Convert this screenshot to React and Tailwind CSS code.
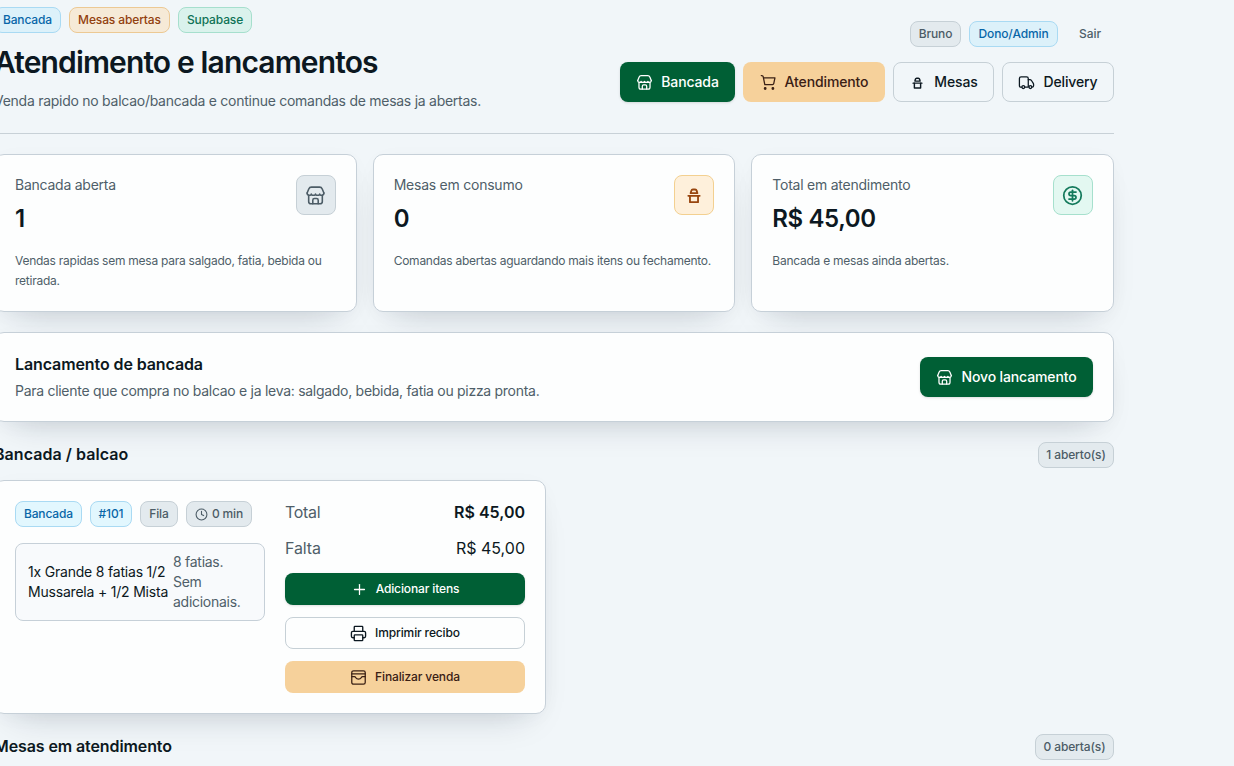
import React from 'react';
import clsx from 'clsx';
import { Plus, Printer, CircleDollarSign, Clock } from 'lucide-react';

const Icon = ({ size = 17, strokeWidth = 1.8, children }) => (
  <svg
    width={size}
    height={size}
    viewBox="0 0 24 24"
    fill="none"
    stroke="currentColor"
    strokeWidth={strokeWidth}
    strokeLinecap="round"
    strokeLinejoin="round"
    className="shrink-0"
  >
    {children}
  </svg>
);

const StoreIcon = ({ size }) => (
  <Icon size={size}>
    <path d="M2.4 9.2 4.300 4.600C5 2.900 5.700 2.400 7.300 2.400h9.400c1.600 0 2.300.5 3 2.200l1.900 4.600" />
    <path d="M2.400 9.200c0 1.500 1 2.600 2.400 2.600s2.400-.7 2.400-1.500c0 .8 1 1.500 2.400 1.500s2.400-.7 2.400-1.500c0 .8 1 1.500 2.400 1.500s2.400-.7 2.400-1.500c0 .8 1 1.500 2.400 1.500s2.400-1.100 2.400-2.600" />
    <path d="M4.200 12v6.800c0 1.900.8 2.700 2.700 2.700h10.200c1.900 0 2.700-.8 2.700-2.700V12" />
    <path d="M8.900 21.300v-3.900c0-1.300.6-1.900 1.900-1.900h2.400c1.300 0 1.900.6 1.900 1.900v3.900" />
  </Icon>
);

const CartIcon = () => (
  <Icon>
    <path d="M1.800 2.200h.8c1.100 0 1.700.5 1.900 1.500L6.800 15h10.800c1 0 1.600-.5 1.800-1.400l1.700-8H5" />
    <circle cx="7.300" cy="20.500" r="1.100" fill="currentColor" />
    <circle cx="18.200" cy="20.500" r="1.100" fill="currentColor" />
  </Icon>
);

const TableIcon = ({ size }) => (
  <Icon size={size} strokeWidth={2}>
    <path d="M8.300 10l.7-2.500c.3-1 .8-1.500 1.800-1.500h2.400c1 0 1.500.5 1.800 1.500l.7 2.500z" />
    <path d="M5.800 12.900h12.400" />
    <path d="M7.600 12.900v6.900h8.800v-6.900" />
  </Icon>
);

const TruckIcon = () => (
  <Icon>
    <path d="M5 18.500H4c-1.300 0-2-.7-2-2V6.500c0-1.600.8-2.400 2.400-2.400h7.700c1.600 0 2.400.8 2.400 2.400v12H10" />
    <path d="M14.500 8h2.200c1 0 1.700.3 2.300 1.200l2.400 3.600c.4.600.6 1 .6 1.800v1.900c0 1.300-.7 2-2 2" />
    <circle cx="7.500" cy="18.500" r="2" />
    <circle cx="17.500" cy="18.500" r="2" />
  </Icon>
);

const CheckoutIcon = () => (
  <Icon>
    <rect x="2.500" y="2.500" width="19" height="19" rx="2.500" />
    <path d="M2.500 7h19" />
    <path d="M2.500 10.800h3.700c1 0 1.400.5 1.900 1.300.8 1.200 2.100 2.100 3.900 2.100s3.100-.9 3.900-2.100c.5-.8.900-1.300 1.900-1.300h3.700" />
  </Icon>
);

const badgeTones = {
  info: 'border-[#a9daf3] bg-[#dcf1fa] text-[#0866a8]',
  infoLight: 'border-[#a9daf3] bg-[#e2f7fe] text-[#0866a8]',
  warning: 'border-[#ecc994] bg-[#f6ead7] text-[#92400e]',
  success: 'border-[#a6dfcd] bg-[#daf2ec] text-[#0f7356]',
  neutral: 'border-[#c6d0d6] bg-[#e3eaee] text-[#4c5c66]',
};

const Badge = ({ tone = 'neutral', className, children }) => (
  <span
    className={clsx(
      'inline-flex h-[26px] shrink-0 items-center justify-center gap-1 whitespace-nowrap rounded-lg border text-xs font-medium tracking-[-0.13px]',
      badgeTones[tone],
      className
    )}
  >
    {children}
  </span>
);

const buttonTones = {
  primary: 'bg-[#005f35] text-white shadow-sm',
  accent: 'bg-[#f6d19b] text-[#3a2015]',
  outline: 'border border-[#c6d0d6] text-[#0c1821]',
};

const Button = ({ tone, small, className, children }) => (
  <button
    className={clsx(
      'flex shrink-0 items-center justify-center gap-2 whitespace-nowrap rounded-lg font-medium tracking-[-0.13px]',
      small ? 'h-8 w-full text-xs' : 'h-10 text-sm',
      buttonTones[tone],
      className
    )}
  >
    {children}
  </button>
);

const Card = ({ className, children }) => (
  <div
    className={clsx(
      'rounded-[10px] border border-[#c6d0d8] bg-[#fdfefe] p-5 shadow-[0_18px_36px_-20px_rgba(15,28,50,0.22),0_4px_24px_-6px_rgba(15,28,50,0.05)]',
      className
    )}
  >
    {children}
  </div>
);

const stats = [
  {
    label: 'Bancada aberta',
    value: '1',
    text: 'Vendas rapidas sem mesa para salgado, fatia, bebida ou retirada.',
    icon: <StoreIcon size={21} />,
    box: 'border-[#c6d0d6] bg-[#e3eaee] text-[#4c5c66]',
  },
  {
    label: 'Mesas em consumo',
    value: '0',
    text: 'Comandas abertas aguardando mais itens ou fechamento.',
    icon: <TableIcon size={22} />,
    box: 'border-[#f3d090] bg-[#fef0db] text-[#98460f]',
  },
  {
    label: 'Total em atendimento',
    value: 'R$ 45,00',
    text: 'Bancada e mesas ainda abertas.',
    icon: <CircleDollarSign size={21} strokeWidth={2} />,
    box: 'border-[#a6e0cd] bg-[#e3f8f1] text-[#147a5c]',
  },
];

const App = () => {
  return (
    <div className="h-[766px] overflow-hidden bg-[#f1f6f9] font-['Inter','Liberation_Sans',sans-serif] text-[#0c1821]">
      <main className="-ml-1.5 flex w-[1120px] flex-col gap-5 pt-[7px]">
        {/* Header */}
        <header className="flex h-[127px] items-start justify-between border-b border-[#c8d1d7]">
          <div>
            <div className="flex gap-2">
              <Badge tone="info" className="w-[67px]">Bancada</Badge>
              <Badge tone="warning" className="w-[101px]">Mesas abertas</Badge>
              <Badge tone="success" className="w-[74px]">Supabase</Badge>
            </div>
            <h1 className="mt-[11px] whitespace-nowrap text-3xl font-semibold leading-9 tracking-[-0.86px]">
              Atendimento e lancamentos
            </h1>
            <p className="mt-[9px] whitespace-nowrap text-sm leading-6 tracking-[-0.265px] text-[#4f5f69]">
              Venda rapido no balcao/bancada e continue comandas de mesas ja abertas.
            </p>
          </div>
          <div className="flex flex-col items-end gap-3 pt-[11px]">
            <div className="flex h-8 items-center gap-2">
              <Badge className="w-[51px]">Bruno</Badge>
              <Badge tone="info" className="w-[89px]">Dono/Admin</Badge>
              <button className="h-8 w-12 text-xs font-medium text-[#4f5f69]">Sair</button>
            </div>
            <nav className="flex gap-2">
              <Button tone="primary" className="w-[115px]"><StoreIcon />Bancada</Button>
              <Button tone="accent" className="w-[142px]"><CartIcon />Atendimento</Button>
              <Button tone="outline" className="w-[101px]"><TableIcon />Mesas</Button>
              <Button tone="outline" className="w-[112px]"><TruckIcon />Delivery</Button>
            </nav>
          </div>
        </header>

        {/* Stats */}
        <section className="grid grid-cols-3 gap-4">
          {stats.map((item) => (
            <Card key={item.label} className="h-[158px]">
              <div className="flex justify-between">
                <div>
                  <p className="text-sm leading-5 tracking-[-0.24px] text-[#4f5f69]">{item.label}</p>
                  <p className="mt-2 text-2xl font-semibold leading-8 tracking-[-0.4px]">{item.value}</p>
                </div>
                <div className={clsx('flex size-10 items-center justify-center rounded-lg border', item.box)}>
                  {item.icon}
                </div>
              </div>
              <p className="mt-4 text-xs leading-5 tracking-[-0.25px] text-[#4f5f69]">{item.text}</p>
            </Card>
          ))}
        </section>

        {/* Counter launch */}
        <Card className="flex h-[90px] items-center justify-between">
          <div className="pb-px">
            <h2 className="text-base font-semibold leading-6 tracking-[-0.1px]">Lancamento de bancada</h2>
            <p className="mt-[5px] text-sm leading-5 tracking-[-0.285px] text-[#4f5f69]">
              Para cliente que compra no balcao e ja leva: salgado, bebida, fatia ou pizza pronta.
            </p>
          </div>
          <Button tone="primary" className="w-[173px]"><StoreIcon />Novo lancamento</Button>
        </Card>

        {/* Open counter orders */}
        <section className="flex flex-col gap-3">
          <div className="flex h-[26px] items-center justify-between">
            <h2 className="pb-0.5 text-base font-semibold tracking-[0.05px]">Bancada / balcao</h2>
            <Badge className="w-[76px]">1 aberto(s)</Badge>
          </div>
          <Card className="flex h-[234px] w-[552px] gap-5">
            <div className="w-[250px]">
              <div className="flex gap-2">
                <Badge tone="infoLight" className="w-[67px]">Bancada</Badge>
                <Badge tone="infoLight" className="w-[42px]">#101</Badge>
                <Badge className="w-[38px]">Fila</Badge>
                <Badge className="w-[66px]"><Clock size={13} strokeWidth={2} />0 min</Badge>
              </div>
              <div className="mt-4 flex h-[78px] items-center rounded-lg border border-[#c6d0d8] bg-[#f8fafc] px-3 text-sm leading-5 tracking-[-0.2px]">
                <p className="w-[145px] shrink-0 whitespace-nowrap">
                  1x Grande 8 fatias 1/2<br />Mussarela + 1/2 Mista
                </p>
                <p className="w-[75px] tracking-[-0.27px] text-[#4f5f69]">8 fatias. Sem adicionais.</p>
              </div>
            </div>
            <div className="flex w-60 flex-col gap-3">
              <div className="flex h-6 items-center justify-between pb-0.5">
                <span className="tracking-[-0.3px] text-[#4f5f69]">Total</span>
                <span className="font-semibold">R$ 45,00</span>
              </div>
              <div className="flex h-6 items-center justify-between pb-0.5">
                <span className="tracking-[-0.1px] text-[#4f5f69]">Falta</span>
                <span>R$ 45,00</span>
              </div>
              <Button tone="primary" small><Plus size={17} strokeWidth={1.8} />Adicionar itens</Button>
              <Button tone="outline" small><Printer size={17} strokeWidth={1.9} />Imprimir recibo</Button>
              <Button tone="accent" small><CheckoutIcon />Finalizar venda</Button>
            </div>
          </Card>
        </section>

        {/* Tables */}
        <section className="flex h-[26px] items-center justify-between">
          <h2 className="pb-0.5 text-base font-semibold tracking-[-0.1px]">Mesas em atendimento</h2>
          <Badge className="w-[79px]">0 aberta(s)</Badge>
        </section>
      </main>
    </div>
  );
};

export default App;
